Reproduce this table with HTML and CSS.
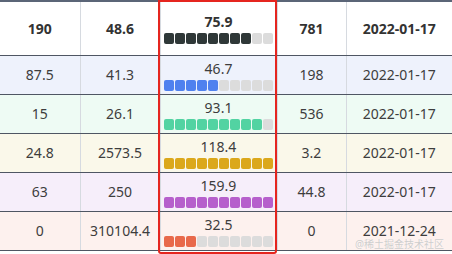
FILE: index.html
```html
<!DOCTYPE html>
<html>
<head>
<meta charset="utf-8">
<link rel="stylesheet" href="styles.css">
</head>
<body>
<div class="wrap">
  <table class="grid">
    <colgroup>
      <col class="c1"><col class="c2"><col class="c3"><col class="c4"><col class="c5">
    </colgroup>
    <thead>
      <tr class="head">
        <td>190</td><td>48.6</td>
        <td class="barcell"><div class="val">75.9</div><div class="bar dark"><i class="on"></i><i class="on"></i><i class="on"></i><i class="on"></i><i class="on"></i><i class="on"></i><i class="on"></i><i class="on"></i><i></i><i></i></div></td>
        <td>781</td><td>2022-01-17</td>
      </tr>
    </thead>
    <tbody>
      <tr class="r-blue">
        <td>87.5</td><td>41.3</td>
        <td class="barcell"><div class="val">46.7</div><div class="bar blue"><i class="on"></i><i class="on"></i><i class="on"></i><i class="on"></i><i class="on"></i><i></i><i></i><i></i><i></i><i></i></div></td>
        <td>198</td><td>2022-01-17</td>
      </tr>
      <tr class="r-green">
        <td>15</td><td>26.1</td>
        <td class="barcell"><div class="val">93.1</div><div class="bar green"><i class="on"></i><i class="on"></i><i class="on"></i><i class="on"></i><i class="on"></i><i class="on"></i><i class="on"></i><i class="on"></i><i class="on"></i><i></i></div></td>
        <td>536</td><td>2022-01-17</td>
      </tr>
      <tr class="r-yellow">
        <td>24.8</td><td>2573.5</td>
        <td class="barcell"><div class="val">118.4</div><div class="bar gold"><i class="on"></i><i class="on"></i><i class="on"></i><i class="on"></i><i class="on"></i><i class="on"></i><i class="on"></i><i class="on"></i><i class="on"></i><i class="on"></i></div></td>
        <td>3.2</td><td>2022-01-17</td>
      </tr>
      <tr class="r-purple">
        <td>63</td><td>250</td>
        <td class="barcell"><div class="val">159.9</div><div class="bar purple"><i class="on"></i><i class="on"></i><i class="on"></i><i class="on"></i><i class="on"></i><i class="on"></i><i class="on"></i><i class="on"></i><i class="on"></i><i class="on"></i></div></td>
        <td>44.8</td><td>2022-01-17</td>
      </tr>
      <tr class="r-pink">
        <td>0</td><td>310104.4</td>
        <td class="barcell"><div class="val">32.5</div><div class="bar orange"><i class="on"></i><i class="on"></i><i class="on"></i><i></i><i></i><i></i><i></i><i></i><i></i><i></i></div></td>
        <td>0</td><td>2021-12-24</td>
      </tr>
    </tbody>
  </table>
  <div class="highlight"></div>
  <div class="watermark">@稀土掘金技术社区</div>
</div>
</body>
</html>
```
FILE: styles.css
```css
html, body {
  margin: 0;
  padding: 0;
  background: #ffffff;
}
.wrap {
  position: relative;
  width: 452px;
  height: 254px;
  overflow: hidden;
  font-family: "Noto Sans", "Noto Sans CJK SC", sans-serif;
  font-size: 14px;
  color: #3d3d3d;
}
.grid {
  border-collapse: collapse;
  table-layout: fixed;
  width: 452px;
  border-top: 2px solid #5b6577;
}
.c1 { width: 80px; }
.c2 { width: 80px; }
.c3 { width: 117px; }
.c4 { width: 69px; }
.c5 { width: 106px; }
.grid td {
  padding: 0;
  text-align: center;
  vertical-align: middle;
  border-left: 1px solid #d6dae0;
  border-bottom: 1px solid #4f5663;
  height: 38px;
  line-height: 18px;
}
.grid td:first-child { border-left: none; }
.head td {
  height: 53px;
  font-weight: 700;
  color: #333333;
}
.r-blue td { background: #eef2fc; }
.r-green td { background: #eefbf4; }
.r-yellow td { background: #faf8ea; }
.r-purple td { background: #f6eefa; }
.r-pink td { background: #fdf1ee; }
.barcell .val {
  margin-bottom: 2px;
}
.bar {
  display: flex;
  justify-content: center;
  gap: 1px;
}
.bar i {
  display: block;
  width: 10px;
  height: 11px;
  border-radius: 2px;
  background: #dcdcdc;
}
.dark i.on { background: #2f3838; }
.blue i.on { background: #4f81ef; }
.green i.on { background: #52d3a2; }
.gold i.on { background: #dba81b; }
.purple i.on { background: #b65fcc; }
.orange i.on { background: #e8694b; }
.highlight {
  position: absolute;
  left: 158px;
  top: 0;
  width: 115px;
  height: 250px;
  border: 2px solid #e5251f;
  border-radius: 0 0 3px 3px;
}
.watermark {
  position: absolute;
  right: 8px;
  bottom: 4px;
  font-size: 10px;
  line-height: 12px;
  color: rgba(200, 200, 200, 0.9);
  text-shadow: 0 0 1px rgba(255,255,255,0.8);
}
```
